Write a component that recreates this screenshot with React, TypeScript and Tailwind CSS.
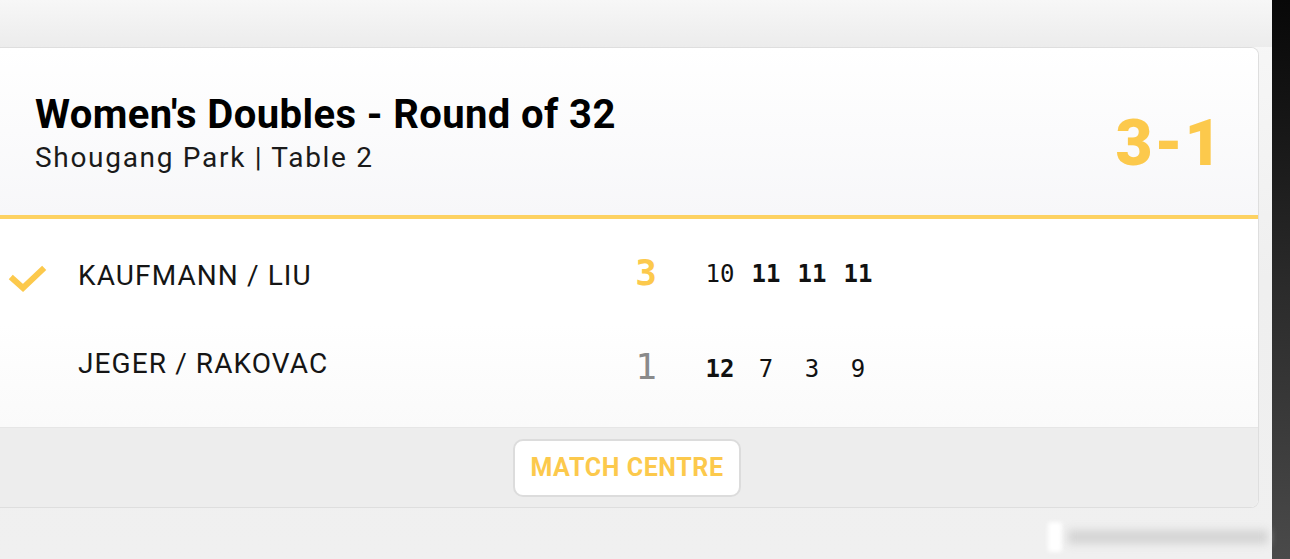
import React from 'react';

const YELLOW = '#fcc94c';

type TeamRow = {
  name: string;
  sets: number;
  winner: boolean;
  games: { value: number; won: boolean }[];
};

const rows: TeamRow[] = [
  {
    name: 'KAUFMANN / LIU',
    sets: 3,
    winner: true,
    games: [
      { value: 10, won: false },
      { value: 11, won: true },
      { value: 11, won: true },
      { value: 11, won: true },
    ],
  },
  {
    name: 'JEGER / RAKOVAC',
    sets: 1,
    winner: false,
    games: [
      { value: 12, won: true },
      { value: 7, won: false },
      { value: 3, won: false },
      { value: 9, won: false },
    ],
  },
];

function CheckMark() {
  return (
    <svg width="40" height="32" viewBox="0 0 40 32" className="ml-[8px] mt-[8px]">
      <path d="M5 15 L15 24 L34 6" fill="none" stroke={YELLOW} strokeWidth="6" strokeLinecap="square" />
    </svg>
  );
}

function ScoreRow({ row }: { row: TeamRow }) {
  return (
    <div className="flex h-[88px] items-center">
      <div className="flex w-[78px] items-center">{row.winner && <CheckMark />}</div>
      <div className="w-[548px] text-[28px] tracking-[1.1px] text-[#151515] font-['Roboto',sans-serif]">{row.name}</div>
      <div
        className={`w-[40px] text-center text-[36px] leading-none font-['DejaVu_Sans_Mono',monospace] ${
          row.winner ? 'font-bold text-[#fcc94c] -mt-[6px]' : 'font-normal text-[#8a8a8a] mt-[6px]'
        }`}
      >
        {row.sets}
      </div>
      <div className={`ml-[31px] flex ${row.winner ? '-mt-[4px]' : 'mt-[10px]'}`}>
        {row.games.map((g, i) => (
          <div
            key={i}
            className={`w-[46px] text-center text-[24px] leading-none text-[#111] font-['DejaVu_Sans_Mono',monospace] ${
              g.won ? 'font-bold' : 'font-normal'
            }`}
          >
            {g.value}
          </div>
        ))}
      </div>
    </div>
  );
}

export default function App() {
  return (
    <div className="flex h-[559px] w-[1290px] overflow-hidden bg-[#f0f0f0] font-['Roboto',sans-serif]">
      <div className="flex w-[1272px] flex-col bg-gradient-to-b from-[#f8f8f8] via-[#efefef] to-[#f0f0f0]">
        <div className="h-[47px] bg-gradient-to-b from-[#f7f7f7] to-[#ececec]" />
        <div className="w-[1259px] overflow-hidden rounded-r-[8px] border border-l-0 border-[#dedede] bg-white">
          <div className="flex h-[167px] items-end justify-between bg-gradient-to-b from-white to-[#f7f7f9] pl-[35px] pr-[35px] pb-[41px]">
            <div>
              <h1 className="text-[40px] font-bold leading-[40px] tracking-[0.4px] text-black">Women's Doubles - Round of 32</h1>
              <p className="mt-[7px] text-[28px] leading-[32px] tracking-[1.7px] text-[#1a1a1a]">Shougang Park | Table 2</p>
            </div>
            <div className="mb-[-2px] text-[64px] font-black leading-none tracking-[1.5px] text-[#fcc94c]">3-1</div>
          </div>
          <div className="h-[4px] bg-[#fdd262]" />
          <div className="bg-gradient-to-b from-white via-white to-[#fafafa] pt-[13px] pb-[19px]">
            {rows.map((row) => (
              <ScoreRow key={row.name} row={row} />
            ))}
          </div>
          <div className="flex h-[80px] items-center justify-center border-t border-[#e6e6e6] bg-[#ededed]">
            <button className="ml-[-4px] h-[58px] w-[228px] rounded-[10px] border-2 border-[#dcdcdc] bg-white text-[25px] font-bold tracking-[0.6px] text-[#fcc94c]">
              MATCH CENTRE
            </button>
          </div>
        </div>
        <div className="flex flex-1 items-center justify-end gap-[6px] pr-[4px] pt-[6px]">
          <div className="h-[30px] w-[14px] rounded-[3px] bg-white blur-[2px]" />
          <div className="h-[14px] w-[200px] bg-[#d4d4d4] blur-[4px]" />
        </div>
      </div>
      <div className="w-[18px] bg-gradient-to-b from-[#080808] via-[#2a2a2a] to-[#4a4a4a]" />
    </div>
  );
}
